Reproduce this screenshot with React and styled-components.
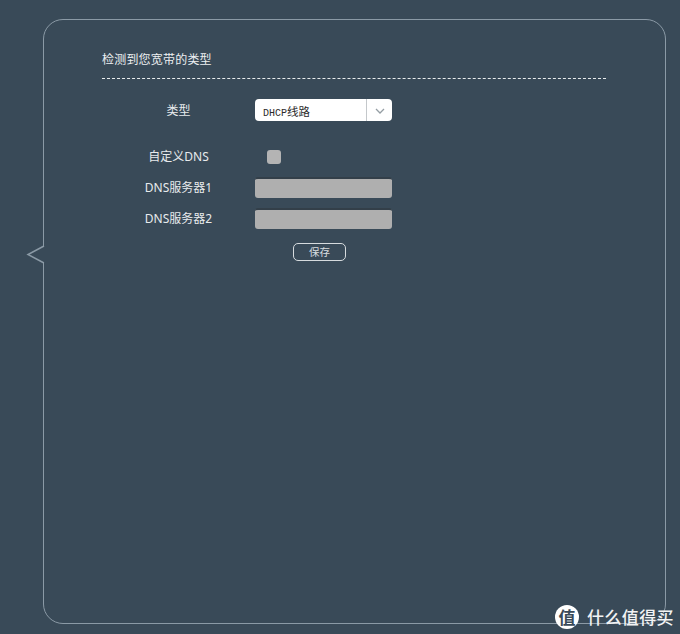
import React from 'react';
import styled, { createGlobalStyle } from 'styled-components';

const CJK = '"Noto Sans", "Noto Sans CJK SC", sans-serif';
const BG = '#394a58';

const GlobalStyle = createGlobalStyle`
  html, body {
    margin: 0;
    height: 634px;
    overflow: hidden;
    background: ${BG};
    font-family: ${CJK};
  }
`;

const Page = styled.div`
  position: relative;
  width: 680px;
  height: 634px;
  padding: 19px 0 0 43px;
  box-sizing: border-box;
`;

const Panel = styled.section`
  position: relative;
  box-sizing: border-box;
  width: 623px;
  height: 605px;
  padding: 31px 59px 0 58px;
  border: 1px solid #8b9aa6;
  border-radius: 20px;
`;

const Pointer = styled.svg`
  position: absolute;
  left: -18px;
  top: 225px;
  width: 20px;
  height: 20px;
`;

const Title = styled.h2`
  margin: 0;
  height: 27px;
  font-size: 12px;
  letter-spacing: 0.2px;
  line-height: 17px;
  font-weight: 400;
  color: #eceff1;
  border-bottom: 1px dashed #e8ecee;
`;

const Form = styled.div`
  display: flex;
  flex-direction: column;
`;

const Row = styled.div`
  display: grid;
  grid-template-columns: 153px 137px;
  align-items: center;
  margin-top: ${(p) => p.$top}px;
`;

const Label = styled.label`
  display: block;
  height: 21px;
  overflow: hidden;
  text-align: center;
  font-size: 12px;
  line-height: 22px;
  color: #e8ebed;
`;

const Select = styled.div`
  display: flex;
  height: 22px;
  background: #fff;
  border-radius: 4px;
  overflow: hidden;
`;

const SelectValue = styled.span`
  flex: 1;
  padding-left: 8px;
  font-family: "Liberation Mono", "Noto Sans CJK SC", monospace;
  font-size: 10px;
  line-height: 25px;
  color: #2a2a2a;
`;

const SelectCjk = styled.span`
  font-family: "Noto Sans CJK SC", sans-serif;
  font-size: 11.5px;
`;

const Caret = styled.span`
  display: flex;
  align-items: center;
  justify-content: center;
  width: 25px;
  padding-top: 2px;
  border-left: 1px solid #c4c8cb;
  color: #949da3;
`;

const Checkbox = styled.span`
  display: block;
  width: 14px;
  height: 14px;
  margin-left: 12px;
  background: #b4b4b4;
  border-radius: 3px;
`;

const Input = styled.div`
  height: 21px;
  box-sizing: border-box;
  background: #afafaf;
  border-top: 2px solid #333f49;
  border-radius: 3px;
`;

const ActionRow = styled.div`
  margin: 14px 0 0 191px;
`;

const SaveButton = styled.button`
  display: block;
  width: 53px;
  height: 18px;
  padding: 0;
  background: transparent;
  border: 1px solid #d6dbde;
  border-radius: 5px;
  font-family: "Noto Sans CJK SC", sans-serif;
  font-size: 10.5px;
  line-height: 16px;
  color: #d8dde0;
`;

const Watermark = styled.div`
  position: absolute;
  left: 555px;
  top: 604px;
  display: flex;
  align-items: center;
  gap: 8px;
  height: 25px;
  white-space: nowrap;
`;

const Badge = styled.span`
  width: 24px;
  height: 24px;
  border-radius: 50%;
  background: #fff;
  color: #394a58;
  font-family: "Noto Sans CJK SC", sans-serif;
  font-size: 17px;
  font-weight: 700;
  line-height: 24px;
  text-align: center;
`;

const Brand = styled.span`
  font-family: "Noto Sans CJK SC", sans-serif;
  font-size: 17px;
  font-weight: 500;
  letter-spacing: 0.4px;
  color: #f2f3f4;
`;

export default function App() {
  return (
    <Page>
      <GlobalStyle />
      <Panel>
        <Pointer viewBox="0 0 20 20">
          <polyline points="18,1 2,9.5 18,18" fill={BG} stroke="#8b9aa6" strokeWidth="1.5" />
          <rect x="18" y="2" width="2" height="15.5" fill={BG} />
        </Pointer>
        <Title>检测到您宽带的类型</Title>
        <Form>
          <Row $top={20}>
            <Label>类型</Label>
            <Select>
              <SelectValue>
                DHCP<SelectCjk>线路</SelectCjk>
              </SelectValue>
              <Caret>
                <svg width="10" height="6" viewBox="0 0 10 6">
                  <path d="M1 1l4 4 4-4" fill="none" stroke="currentColor" strokeWidth="1.3" />
                </svg>
              </Caret>
            </Select>
          </Row>
          <Row $top={25}>
            <Label>自定义DNS</Label>
            <Checkbox />
          </Row>
          <Row $top={10}>
            <Label>DNS服务器1</Label>
            <Input />
          </Row>
          <Row $top={10}>
            <Label>DNS服务器2</Label>
            <Input />
          </Row>
          <ActionRow>
            <SaveButton>保存</SaveButton>
          </ActionRow>
        </Form>
      </Panel>
      <Watermark>
        <Badge>值</Badge>
        <Brand>什么值得买</Brand>
      </Watermark>
    </Page>
  );
}
